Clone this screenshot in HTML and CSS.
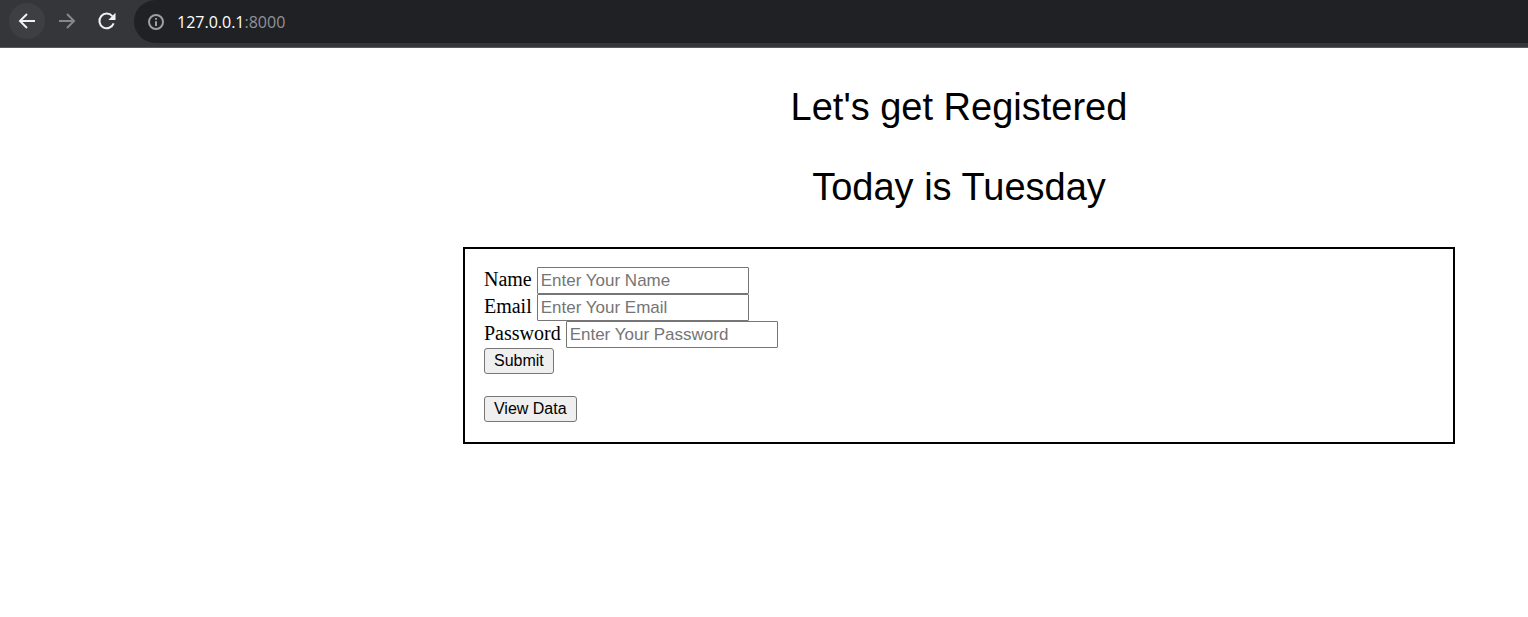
FILE: index.html
```html
<!DOCTYPE html>
<html lang="en">
<head>
<meta charset="utf-8">
<title>Register</title>
<link rel="stylesheet" href="styles.css">
</head>
<body>
<header class="toolbar">
  <nav class="nav">
    <button class="nav-button nav-button-active" type="button" aria-label="Back">
      <svg viewBox="0 0 20 20" width="20" height="20"><path d="M18 10H3M10 3L3 10L10 17"/></svg>
    </button>
    <button class="nav-button nav-button-dim" type="button" aria-label="Forward">
      <svg viewBox="0 0 20 20" width="20" height="20"><path d="M2 10H17M10 3L17 10L10 17"/></svg>
    </button>
    <button class="nav-button" type="button" aria-label="Reload">
      <svg viewBox="0 0 20 20" width="20" height="20"><path d="M16.6 12.4A7.3 7.3 0 1 1 15.3 5.2"/><path class="solid" d="M18.5 1.8V9H11.3Z"/></svg>
    </button>
  </nav>
  <div class="address">
    <svg class="info" viewBox="0 0 18 18" width="18" height="18" aria-hidden="true"><circle cx="9" cy="9" r="7"/><path d="M9 8.2V13M9 5V6.8"/></svg>
    <span class="url">127.0.0.1<span class="port">:8000</span></span>
  </div>
</header>
<main class="page">
  <h1 class="title">Let's get Registered</h1>
  <h2 class="title">Today is Tuesday</h2>
  <section class="panel">
    <form class="form">
      <div class="field"><label for="name">Name</label><input class="input" id="name" type="text" placeholder="Enter Your Name"></div>
      <div class="field"><label for="email">Email</label><input class="input" id="email" type="email" placeholder="Enter Your Email"></div>
      <div class="field"><label for="password">Password</label><input class="input" id="password" type="password" placeholder="Enter Your Password"></div>
      <button class="button" type="submit">Submit</button>
    </form>
    <button class="button" type="button">View Data</button>
  </section>
</main>
</body>
</html>
```
FILE: styles.css
```css
* {
  box-sizing: border-box;
}

body {
  margin: 0;
  background: #fff;
  color: #000;
  font-family: "Liberation Serif", "Times New Roman", serif;
  font-size: 20px;
}

.toolbar {
  display: flex;
  padding-bottom: 4px;
  background: #35363a;
  border-bottom: 1px solid #5b595e;
}

.nav {
  display: flex;
  align-items: center;
  gap: 4px;
  padding: 0 9px;
  height: 42px;
}

.nav-button {
  display: flex;
  align-items: center;
  justify-content: center;
  width: 36px;
  height: 36px;
  padding: 0;
  border: 0;
  border-radius: 50%;
  background: none;
  color: #f1f1f4;
}

.nav-button-active {
  background: #3e3f43;
}

.nav-button-dim {
  color: #87888b;
}

.nav-button svg,
.info {
  fill: none;
  stroke: currentColor;
  stroke-width: 2;
}

.nav-button .solid {
  fill: currentColor;
  stroke: none;
}

.address {
  display: flex;
  flex: 1;
  align-items: center;
  gap: 12px;
  height: 43px;
  padding-left: 13px;
  border-radius: 22px 0 0 22px;
  background: #202124;
}

.info {
  color: #9aa0a6;
}

.url {
  color: #fff;
  font-family: "Open Sans", "Noto Sans", sans-serif;
  font-size: 16px;
}

.port {
  color: #8f9499;
}

.page {
  margin: 37px 73px 0 30.3%;
}

.title {
  margin: 0 0 36px;
  font-family: "Liberation Sans", Arial, sans-serif;
  font-size: 38px;
  font-weight: 400;
  line-height: 44px;
  text-align: center;
}

.panel {
  margin-top: 38px;
  padding: 18px 19px 20px;
  border: 2px solid #000;
}

.form {
  margin-bottom: 22px;
}

.field {
  display: flex;
  gap: 5px;
  height: 27px;
  line-height: 24px;
}

.input {
  width: 212px;
  height: 27px;
  padding: 1px 3px;
  border: 1px solid #767676;
  border-radius: 1px;
  background: #fff;
  font-family: "Liberation Sans", Arial, sans-serif;
  font-size: 17px;
}

.input::placeholder {
  color: #757575;
}

.button {
  display: block;
  height: 26px;
  padding: 0 9px;
  border: 1px solid #767676;
  border-radius: 3px;
  background: #efefef;
  color: #000;
  font-family: "Liberation Sans", Arial, sans-serif;
  font-size: 16px;
}
```
